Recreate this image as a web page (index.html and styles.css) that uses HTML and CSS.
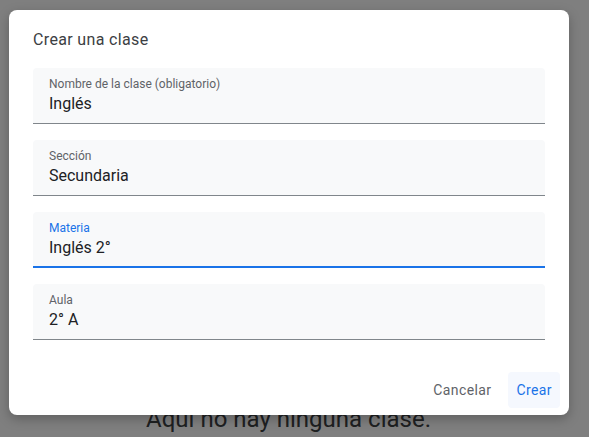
FILE: index.html
```html
<!DOCTYPE html>
<html lang="es">
<head>
<meta charset="utf-8">
<title>Crear una clase</title>
<link rel="stylesheet" href="styles.css">
</head>
<body>
<main class="page">
  <p class="empty">Aquí no hay ninguna clase.</p>
</main>
<div class="scrim"></div>
<div class="dialog" role="dialog" aria-labelledby="dlg-title">
  <h2 class="title" id="dlg-title">Crear una clase</h2>
  <div class="fields">
    <div class="field">
      <span class="label">Nombre de la clase (obligatorio)</span>
      <span class="value">Inglés</span>
    </div>
    <div class="field">
      <span class="label">Sección</span>
      <span class="value">Secundaria</span>
    </div>
    <div class="field focused">
      <span class="label">Materia</span>
      <span class="value">Inglés 2°</span>
    </div>
    <div class="field">
      <span class="label">Aula</span>
      <span class="value">2° A</span>
    </div>
  </div>
  <div class="actions">
    <button class="btn">Cancelar</button>
    <button class="btn primary">Crear</button>
  </div>
</div>
</body>
</html>
```

FILE: styles.css
```css
* { box-sizing: border-box; }
html, body {
  margin: 0;
  padding: 0;
  height: 100%;
  overflow: hidden;
}
body {
  background: #ffffff;
  font-family: Roboto, "Liberation Sans", sans-serif;
  position: relative;
}
.page {
  padding-top: 403px;
  display: flex;
  justify-content: center;
}
.empty {
  margin: 0 0 0 -12px;
  font-size: 24px;
  line-height: 32px;
  color: #3c4043;
}
.scrim {
  position: absolute;
  inset: 0;
  background: rgba(0, 0, 0, 0.5);
}
.dialog {
  position: absolute;
  left: 9px;
  top: 10px;
  width: 560px;
  height: 405px;
  background: #ffffff;
  border-radius: 8px;
  box-shadow: 0 4px 12px rgba(0, 0, 0, 0.25);
  padding: 18px 9px 7px 24px;
  display: flex;
  flex-direction: column;
}
.title {
  margin: 0 0 16px;
  font-size: 16px;
  line-height: 24px;
  font-weight: 400;
  color: #3c4043;
  letter-spacing: 0.35px;
}
.fields {
  display: flex;
  flex-direction: column;
  gap: 16px;
  width: 512px;
}
.field {
  height: 56px;
  background: #f8f9fa;
  border-bottom: 1px solid #80868b;
  border-radius: 4px 4px 0 0;
  padding: 8px 16px 0;
  display: flex;
  flex-direction: column;
}
.field.focused {
  border-bottom: 2px solid #1a73e8;
}
.label {
  font-size: 12px;
  line-height: 16px;
  color: #5f6368;
}
.focused .label {
  color: #1a73e8;
}
.value {
  font-size: 16px;
  line-height: 24px;
  color: #202124;
}
.actions {
  margin-top: auto;
  display: flex;
  justify-content: flex-end;
  gap: 9px;
}
.btn {
  font-family: inherit;
  font-size: 14px;
  font-weight: 400;
  letter-spacing: 0.4px;
  height: 36px;
  padding: 0 8px;
  border: none;
  border-radius: 4px;
  background: transparent;
  color: #5f6368;
}
.btn.primary {
  color: #1a73e8;
  background: #f5f8fe;
}
```
